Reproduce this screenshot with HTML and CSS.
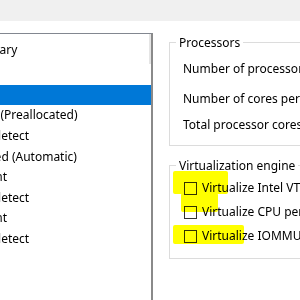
FILE: index.html
```html
<!DOCTYPE html>
<html>
<head>
    <title>Virtual Machine Settings</title>
    <meta name="viewport" content="width=device-width, initial-scale=1.0">
    <link rel="stylesheet" href="styles.css">
</head>
<body>
    <div class="tabstrip"></div>

    <div class="page">
        <!-- Device list -->
        <div class="devices">
            <div class="devices-head">
                <span class="col-device">Device</span>
                <span class="col-summary">Summary</span>
            </div>
            <div class="device"><span class="col-device">Memory</span><span class="col-summary">4 GB</span></div>
            <div class="device selected"><span class="col-device">Processors</span><span class="col-summary">2</span></div>
            <div class="device"><span class="col-device">Hard Disk (NVMe)</span><span class="col-summary">60 GB (Preallocated)</span></div>
            <div class="device"><span class="col-device">CD/DVD (SATA)</span><span class="col-summary">Auto detect</span></div>
            <div class="device"><span class="col-device">Network Adapter</span><span class="col-summary">Bridged (Automatic)</span></div>
            <div class="device"><span class="col-device">USB Controller</span><span class="col-summary">Present</span></div>
            <div class="device"><span class="col-device">Sound Card</span><span class="col-summary">Auto detect</span></div>
            <div class="device"><span class="col-device">Printer</span><span class="col-summary">Present</span></div>
            <div class="device"><span class="col-device">Display</span><span class="col-summary">Auto detect</span></div>
        </div>

        <!-- Processor settings -->
        <div class="settings">
            <fieldset class="group processors">
                <legend>Processors</legend>
                <div class="field first">Number of processors:</div>
                <div class="field second">Number of cores per processor:</div>
                <div class="field third">Total processor cores:</div>
            </fieldset>

            <fieldset class="group engine">
                <legend>Virtualization engine</legend>
                <label class="check"><span class="box"></span>Virtualize Intel VT-x/EPT or AMD-V/RVI</label>
                <label class="check"><span class="box"></span>Virtualize CPU performance counters</label>
                <label class="check"><span class="box"></span>Virtualize IOMMU (IO memory management unit)</label>
            </fieldset>
        </div>
    </div>

    <!-- Highlighter marks -->
    <div class="mark mark-a"></div>
    <div class="mark mark-b"></div>
    <div class="mark mark-c"></div>
</body>
</html>
```

FILE: styles.css
```css
body {
    margin: 0;
    width: 300px;
    height: 300px;
    overflow: hidden;
    background: #ffffff;
    font-family: "Noto Sans", "Open Sans", sans-serif;
    font-size: 12px;
    line-height: 16px;
    color: #000000;
}

/* Tab strip */
.tabstrip {
    height: 21px;
    background: #f0f0f0;
}

.page {
    display: flex;
    align-items: flex-start;
    padding-top: 12px;
}

/* Device list */
.devices {
    flex: none;
    width: 310px;
    height: 266px;
    margin-left: -160px;
    border-top: 1px solid #828790;
    border-left: 1px solid #828790;
    border-right: 2px solid #8a8a8a;
    overflow: hidden;
}

.devices-head {
    display: flex;
    height: 30px;
    box-sizing: border-box;
    padding-top: 8px;
}

.devices-head .col-summary {
    flex: 1;
    padding-left: 2px;
    margin-top: -8px;
    padding-top: 8px;
    border-right: 2px solid #e5e5e5;
}

.device {
    display: flex;
    align-items: center;
    height: 20.6px;
    white-space: nowrap;
}

.device .col-summary {
    padding-left: 3px;
}

.col-device {
    width: 120px;
    flex: none;
    overflow: hidden;
    white-space: nowrap;
}

.device.selected {
    background: #0078d7;
    color: #ffffff;
}

/* Settings pane */
.settings {
    flex: 1;
    min-width: 0;
    overflow: hidden;
    padding-left: 16px;
}

.group {
    width: 260px;
    margin: 0;
    padding: 0 0 12px 6px;
    border: 1px solid #dcdcdc;
    white-space: nowrap;
}

.group legend {
    padding: 0 3px;
    line-height: 15px;
}

.processors {
    margin-top: 2px;
}

.field {
    padding-left: 7px;
}

.field.first { margin-top: 11px; }
.field.second { margin-top: 14px; }
.field.third { margin-top: 10px; }

.engine {
    margin-top: 12px;
    padding-bottom: 14px;
}

.check {
    display: flex;
    align-items: center;
    height: 16px;
    padding-left: 8px;
    margin-top: 8px;
}

.check:first-of-type {
    margin-top: 7px;
}

.box {
    width: 13px;
    height: 13px;
    box-sizing: border-box;
    border: 1px solid #333333;
    margin-right: 5px;
    flex: none;
}

/* Highlighter */
.mark {
    position: absolute;
    background: #ffff00;
    mix-blend-mode: multiply;
    border-radius: 2px;
}

.mark-a {
    left: 173px;
    top: 171px;
    width: 55px;
    height: 23px;
}

.mark-b {
    left: 181px;
    top: 193px;
    width: 37px;
    height: 19px;
}

.mark-c {
    left: 173px;
    top: 225px;
    width: 71px;
    height: 19px;
}
```
